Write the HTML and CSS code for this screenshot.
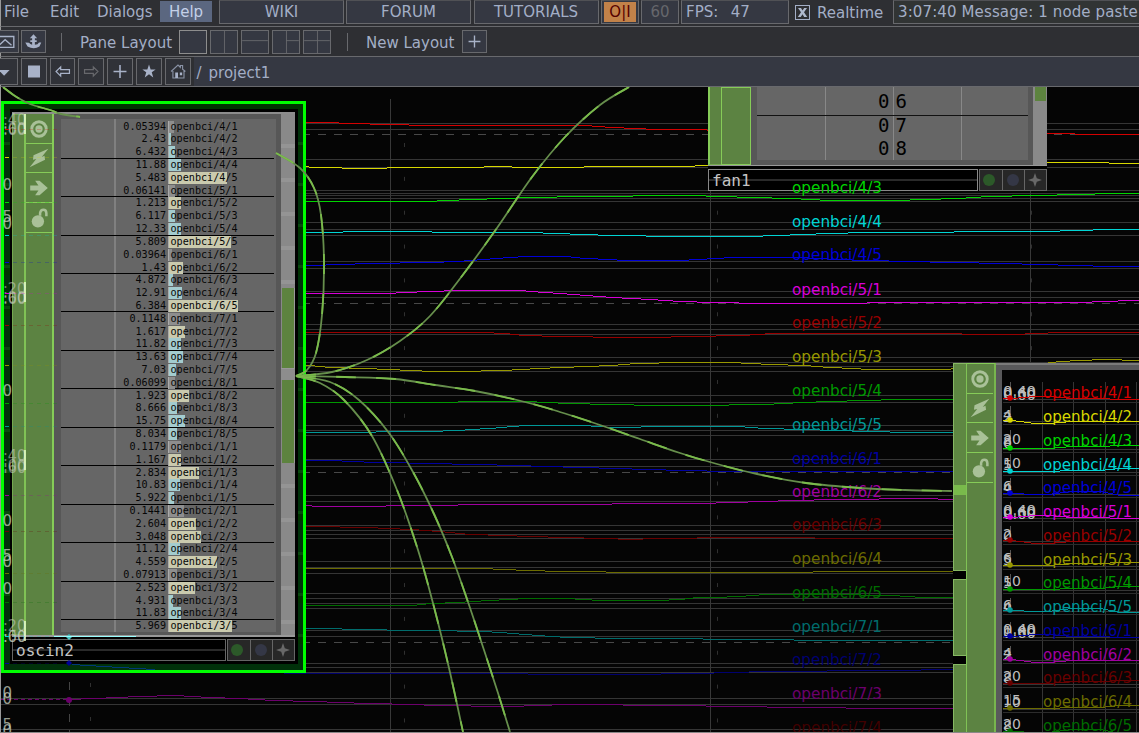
FILE: index.html
```html
<!DOCTYPE html>
<html lang="en">
<head>
<meta charset="utf-8">
<title>project1</title>
<link rel="stylesheet" href="styles.css">
</head>
<body>
<svg width="0" height="0" class="defs">
  <symbol id="i-target" viewBox="0 0 20 20"><circle cx="10" cy="10" r="6.600" fill="none" stroke="currentColor" stroke-width="2.600"/><circle cx="10" cy="10" r="3.300" fill="currentColor"/></symbol>
  <symbol id="i-bolt" viewBox="0 0 20 20"><path fill="currentColor" d="M18.500 1.500 5 7.500 4.500 11.500 7.500 11 1.500 18.500 15.500 11.500 15 8 12.500 9Z"/></symbol>
  <symbol id="i-arrow" viewBox="0 0 20 20"><path fill="currentColor" d="M2 7.800h7.500L6.500 3.500h4l7.500 6.500-7.500 6.500h-4l3-4.300H2z"/></symbol>
  <symbol id="i-lock" viewBox="0 0 20 20"><circle cx="9" cy="13" r="5.600" fill="currentColor"/><path d="M11 8V5.500Q11.500 2.500 14 2.500T16.700 5.500V8.500" fill="none" stroke="currentColor" stroke-width="2.300"/></symbol>
  <symbol id="i-spark" viewBox="0 0 20 20"><path fill="currentColor" d="M10 3l1.800 5.200L17 10l-5.200 1.800L10 17l-1.800-5.200L3 10l5.200-1.800z"/></symbol>
</svg>

<div class="app">
  <nav class="menu">
    <span class="item file">File</span>
    <span class="item edit">Edit</span>
    <span class="item dialogs">Dialogs</span>
    <span class="item help">Help</span>
    <div class="tabs">
      <span class="box link">WIKI</span>
      <span class="box link gap2">FORUM</span>
      <span class="box link gap3">TUTORIALS</span>
    </div>
    <span class="box power"><b>O|I</b></span>
    <span class="box rate">60</span>
    <span class="box fps">FPS:&nbsp; 47</span>
    <span class="check"><svg viewBox="0 0 13 13"><path d="M2 2h3l1.500 2.500L8.200 2H11L8 6.300l3.200 4.700h-3L6.500 8.300 4.700 11H1.800l3.200-4.700z" fill="#aeb8cc"/></svg></span>
    <span class="realtime">Realtime</span>
    <span class="box message">3:07:40 Message: 1 node paste</span>
  </nav>

  <div class="layoutbar">
    <span class="sq first"><svg viewBox="0 0 25 23"><path d="M1 6h19.500v12H1M5 15l6-5.500 7 6" fill="none" stroke="#a8b2c8" stroke-width="1.500"/></svg></span>
    <span class="sq"><svg viewBox="0 0 25 23"><path d="M12.500 3.500l4 4.500h-2.500v2h2v2h-2v3q3.500 0 4.500-2.500h2.500l-2 4.500q-6 4-13 0l-2.500-4.500 4 .5q1.500 2 3.500 2v-3h-2v-2h2v-2H8.500z" fill="#a8b2c8"/></svg></span>
    <i class="sep"></i>
    <span class="label pane">Pane Layout</span>
    <div class="layouts">
      <svg class="lay on" viewBox="0 0 28 24"></svg>
      <svg class="lay" viewBox="0 0 28 24"><path d="M14.500 0v24"/></svg>
      <svg class="lay" viewBox="0 0 28 24"><path d="M0 10.500h28"/></svg>
      <svg class="lay" viewBox="0 0 28 24"><path d="M14.500 0v24M14 10.500h14"/></svg>
      <svg class="lay" viewBox="0 0 28 24"><path d="M14.500 0v24M0 10.500h28"/></svg>
    </div>
    <i class="sep two"></i>
    <span class="label newl">New Layout</span>
    <span class="sq add"><svg viewBox="0 0 25 23"><path d="M12.500 5v13M6 11.500h13" stroke="#a8b2c8" stroke-width="1.500"/></svg></span>
  </div>

  <div class="pathbar">
    <span class="pb cut"><svg viewBox="0 0 26 27"><path d="M6 12h12l-6 6z" fill="#a8b2c8"/></svg></span>
    <span class="pb"><svg viewBox="0 0 26 27"><path d="M6.500 7h13v13h-13z" fill="#a8b2c8"/></svg></span>
    <span class="pb"><svg viewBox="0 0 26 27"><path d="M5.500 13.500l5-5v3h9.500v4h-9.500v3z" fill="none" stroke="#a8b2c8" stroke-width="1.300"/></svg></span>
    <span class="pb"><svg viewBox="0 0 26 27"><path d="M20.500 13.500l-5-5v3H6v4h9.500v3z" fill="none" stroke="#67686c" stroke-width="1.300"/></svg></span>
    <span class="pb"><svg viewBox="0 0 26 27"><path d="M13 6.500v14M6 13.500h14" stroke="#a8b2c8" stroke-width="1.700"/></svg></span>
    <span class="pb"><svg viewBox="0 0 26 27"><path d="M13 6l1.800 5.200h5.400l-4.200 3.200 1.600 5.600L13 16.600 8.400 20l1.600-5.600-4.200-3.200h5.400z" fill="#a8b2c8"/></svg></span>
    <span class="pb"><svg viewBox="0 0 26 27"><path d="M5.500 13.500l7.500-7 2.500 2.500V7h2.500v4l3 2.500M7.500 13v7.500h12V13" fill="none" stroke="#8a93a6" stroke-width="1.200"/><path d="M10 14.500h3v6h-3zM15 14.500h2.500v3h-2.500z" fill="#a8b2c8"/></svg></span>
    <span class="path"><span class="slash">/</span><span class="proj">project1</span></span>
  </div>

  <main class="network">
    <svg class="plot" id="plot" viewBox="0 87 1139 645"></svg>

    <section class="node oscin">
      <div class="body">
        <div class="inputs"></div>
        <div class="flags">
          <svg><use href="#i-target"/></svg><svg><use href="#i-bolt"/></svg><svg><use href="#i-arrow"/></svg><svg><use href="#i-lock"/></svg>
        </div>
        <div class="frame"><div class="channels" id="channels"></div></div>
        <div class="outputs"><i class="level"></i><i class="port"></i><i class="level low"></i></div>
      </div>
      <footer class="caption">
        <span class="name">oscin2</span>
        <span class="dot"><i class="green"></i></span><span class="dot"><i></i></span><span class="dot"><svg><use href="#i-spark"/></svg></span>
      </footer>
    </section>

    <section class="node fan">
      <div class="body">
        <div class="inputs"></div>
        <div class="flags"></div>
        <div class="frame"><div class="table"><span>0<b>6</b></span><span>0<b>7</b></span><span>0<b>8</b></span></div></div>
        <div class="outputs"><i class="level"></i></div>
      </div>
      <footer class="caption">
        <span class="name">fan1</span>
        <span class="dot"><i class="green"></i></span><span class="dot"><i></i></span><span class="dot"><svg><use href="#i-spark"/></svg></span>
      </footer>
    </section>

    <section class="node trail">
      <div class="inputs"><i class="seg a"><i></i></i><i class="seg b"></i><i class="seg c"></i></div>
      <div class="flags">
        <svg><use href="#i-target"/></svg><svg><use href="#i-bolt"/></svg><svg><use href="#i-arrow"/></svg><svg><use href="#i-lock"/></svg>
      </div>
      <div class="frame"><div class="view"></div></div>
    </section>

    <svg class="plot over" id="over" viewBox="0 87 1139 645"></svg>
  </main>
</div>
<script src="app.js"></script>
</body>
</html>
```
FILE: styles.css
```css
* { box-sizing: border-box; }
body { margin: 0; background: #000; overflow: hidden; }
.defs { position: absolute; }
.app { width: 1139px; height: 733px; display: flex; flex-direction: column; overflow: hidden;
  font: 15px/20px "DejaVu Sans", Verdana, sans-serif; color: #a3aec6; background: #2e2f33; white-space: nowrap; }
svg { display: block; }

.menu { height: 27px; flex: none; display: flex; border-bottom: 1px solid #68696d; border-left: 1px solid #999; }
.item { height: 21px; margin-top: 1px; line-height: 22px; flex: none; }
.file { margin-left: 3px; width: 46px; }
.edit { width: 47px; }
.dialogs { width: 63px; }
.help { width: 52px; background: #5b6780; text-align: center; color: #c3d0e8; }
.tabs { display: flex; margin-left: 7px; }
.box { height: 24px; flex: none; border: 1px solid #68696d; border-top-color: #505155; background: #353842; line-height: 23px; }
.link { width: 125px; text-align: center; }
.gap2 { margin-left: 2px; }
.gap3 { margin-left: 3px; padding-right: 1px; }
.power { width: 38px; margin-left: 2px; padding: 1px 2px; }
.power b { display: block; height: 20px; background: #c28249; color: #500; text-align: center; font-weight: 400; line-height: 21px; }
.rate { width: 38px; margin-left: 2px; text-align: center; color: #66676c; }
.fps { width: 108px; margin-left: 2px; padding-left: 4px; word-spacing: 1.500px; }
.check { width: 15px; height: 15px; margin: 5px 0 0 6px; border: 1px solid #a3aec6; flex: none; }
.realtime { width: 76px; margin-left: 7px; line-height: 27px; flex: none; }
.message { width: 260px; background: #313434; padding-left: 4px; letter-spacing: .120px; }

.layoutbar { height: 30px; flex: none; display: flex; align-items: center; border-bottom: 1px solid #68696d; border-left: 1px solid #999; }
.sq { width: 25px; height: 23px; border: 1px solid #68696d; background: #353842; margin-left: 2px; flex: none; }
.sq svg { width: 23px; height: 21px; }
.sq.first { margin-left: -7px; }
.sep { width: 1px; height: 18px; background: #68696d; margin-left: 15px; flex: none; }
.label { flex: none; line-height: 22px; padding-top: 2px; }
.pane { margin-left: 18px; width: 99px; }
.layouts { display: flex; gap: 3px; }
.lay { width: 28px; height: 24px; border: 1px solid #68696d; background: #353842; fill: none; stroke: #68696d; }
.lay.on { border-color: #8d8d8d; }
.sep.two { margin-left: 16px; }
.newl { margin-left: 18px; width: 96px; }
.add { margin-left: 0; }

.pathbar { height: 30px; flex: none; display: flex; align-items: center; gap: 3px; border-bottom: 1px solid #68696d; border-left: 1px solid #999; }
.pb { width: 25.800px; height: 27px; border: 1px solid #68696d; background: #303238; flex: none; }
.pb svg { width: 24px; height: 25px; }
.pb.cut { margin-left: -9px; }
.path { flex: 1; height: 29px; background: #353842; padding-left: 3px; line-height: 32px; display: flex; }
.slash { width: 12px; }

.network { position: relative; flex: 1; background: #050505; border-left: 1px solid #999; border-bottom: 1px solid #8a8888; overflow: hidden; }
.plot { position: absolute; left: -1px; top: 0; width: 1139px; height: 645px; }
.plot text { font-family: "DejaVu Sans", sans-serif; }
.over { pointer-events: none; }

.node { position: absolute; }
.body { display: flex; }
.inputs { width: 12px; flex: none; background: #5c8342; border: 1px solid #74a84f; border-right: 0; }
.flags { flex: none; background: #5c8342; border-left: 2px solid #80c255; border-right: 1px solid #86cc58; color: #a9c198; }
.flags svg { width: 26px; height: 30px; padding: 4px 2px 3px; border-bottom: 1px solid #86cc58; }
.flags svg:nth-child(2) { height: 29px; padding-top: 3px; }
.frame { background: #575757; flex: 1; }
.outputs { background: #898989; flex: none; }
.caption { display: flex; }
.name { font: 16px/22px "DejaVu Sans Mono", monospace; color: #c4c4c4; border: 1px solid #666; flex: 1; padding-left: 3px;
  background: linear-gradient(#000 45%, #2a2a2a 45% 55%, #000 55%); }
.dot { border: 1px solid #666; background: #272727; display: grid; place-items: center; flex: none; width: 23px; margin-left: -1px; padding-right: 2px; }
.dot:nth-child(2) { margin-left: 1px; width: 24px; padding-right: 4px; }
.dot i { width: 12px; height: 12px; border-radius: 50%; background: #343746; }
.dot .green { background: #2c5929; }
.dot svg { width: 20px; height: 20px; color: #686868; }

.oscin { left: 0; top: 14px; width: 305px; height: 572px; border: 3px solid #0f0; padding: 8px;
  background: linear-gradient(#000, #000) 6px 5px / 288px 555px no-repeat, repeating-linear-gradient(#003300 0 7px, #00310a 7px 38px, #09480e 38px 41px); }
.oscin .body { height: 525px; border-top: 2px solid #8d8d8d; border-bottom: 2px solid #999; }
.oscin .flags { width: 30px; border-right-width: 2px; }
.oscin .frame { padding: 5px 5px 5px 7px; }
.oscin .outputs { width: 14px; padding-top: 174px; background: repeating-linear-gradient(#898989 0 30px, #949494 30px 34px); }
.level { display: block; height: 80px; background: #5d833f; border-left: 1px solid #898989; border-right: 1px solid #999; }
.port { display: block; height: 12px; background: #8d8d8d; border-top: 1px solid #999; }
.low { height: 83px; }
.oscin .caption { margin: 2px 0 0; height: 22px; }
.channels { height: 513px; overflow: hidden; padding-top: 1.600px; background: linear-gradient(#808080, #808080) 53px 0 / 2px 100% no-repeat, linear-gradient(#777, #777) 161px 0 / 1px 100% no-repeat, #666;
  font: 10.150px/12px "DejaVu Sans Mono", monospace; color: #060606; }
.row { display: grid; grid-template-columns: 105px 1fr; column-gap: 2px; height: 12.820px; }
.row.rule { background: linear-gradient(#000, #000) 0 100% / 213px 1.300px no-repeat; }
.row .val { text-align: right; }
.row .chan { display: flex; }
.bar { height: 12px; margin-right: calc(-1 * var(--w)); width: var(--w); border-left: 1px solid #aaa; flex: none; }
.bar.g { background: #8e8e8e; }
.bar.c { background: #a3cccf; }
.bar.y { background: #cacaae; }
.row .txt { padding-left: 2.500px; position: relative; }

.fan { left: 707px; top: 0; width: 339px; height: 104px; background: #000; }
.fan .body { height: 79px; border-bottom: 1px solid #999; margin-bottom: 3px; }
.fan .inputs { width: 13px; border-left: 2px solid #86cc58; border-top: 0; }
.fan .flags { width: 30px; border: 1px solid #86cc58; }
.fan .frame { padding: 0 5px 5px 6px; }
.fan .outputs { width: 14px; padding: 0 1px 0 2px; }
.fan .level { height: 14px; border: 0; }
.fan .caption { height: 22px; }
.fan .name { border-color: #888; }
.table { height: 73px; color: #000; font: 19px/23.500px "DejaVu Sans Mono", monospace; padding-top: 3px; display: grid; justify-content: center; grid-auto-rows: 23.500px;
  background: linear-gradient(#111, #111) 0 28px / 100% 1px no-repeat, linear-gradient(#888, #888) 68px 0 / 1px 100% no-repeat, linear-gradient(#888, #888) 136px 0 / 1px 100% no-repeat, linear-gradient(#888, #888) 204px 0 / 1px 100% no-repeat, #666; }
.table span { display: flex; gap: 6px; }
.table b { font-weight: 400; }

.trail { left: 952px; top: 276px; width: 187px; height: 369px; display: flex; background: #000; }
.trail .inputs { width: 13px; border: 0; background: none; display: flex; flex-direction: column; gap: 8px; }
.seg { border: 1px solid #86b863; border-right: 0; background: #5e8742; display: block; }
.seg.a { height: 208px; padding-top: 121px; }
.seg.a i { display: block; height: 10px; background: #79ba4b; }
.seg.b { height: 77px; }
.seg.c { flex: 1; border-bottom: 0; }
.trail .flags { width: 30px; border-left-width: 1px; border-right: 2px solid #78b54e; border-top: 1px solid #86cc58; }
.trail .frame { display: flex; padding: 7px 0 0 6px; background: linear-gradient(#7b7b7b 2px, #59595b 2px); }
.view { flex: 1; background: #050505; }
```
FILE: app.js
```js
const palette = {
  r: '#d40000', y: '#d8d800', g: '#00d400', c: '#00d4d4', b: '#0000d8', m: '#d800d8',
  r2: '#980000', y2: '#989800', g2: '#009800', c2: '#009898', b2: '#0000a0', m2: '#a000a0',
  r3: '#680000', y3: '#6c6c00', g3: '#006c00', c3: '#006c6c', b3: '#000070', m3: '#6c006c', r4: '#400000'
};
const plot = [];
const over = [];
const line = (x1, y1, x2, y2, c, extra = '') =>
  `<path d="M${x1} ${y1}L${x2} ${y2}" stroke="${c}" ${extra}/>`;
const text = (x, y, s, fill, size, len) =>
  `<text x="${x}" y="${y}" fill="${fill}" font-size="${size}" ${len ? `textLength="${len}" lengthAdjust="spacingAndGlyphs"` : ''}>${s}</text>`;
// one-pixel stepped trace: each level is held, then jumps to the next sample
function poly(pts, c) {
  const p = pts.split(' ').map(s => s.split(',').map(Number));
  let d = `M${p[0][0]} ${p[0][1] + .5}`;
  for (let i = 1; i < p.length; i++) {
    const [x0, y0] = p[i - 1], [x1, y1] = p[i];
    const n = Math.abs(y1 - y0), dir = Math.sign(y1 - y0);
    for (let k = 1; k <= n; k++) {
      const x = Math.round(x0 + (x1 - x0) * (k - .5) / n);
      d += `H${x}M${x} ${y0 + dir * k + .5}`;
    }
    d += `H${x1}`;
  }
  return `<path d="${d}" fill="none" stroke="${c}"/>`;
}

// background grid
[123,129,159,167,190,193,195,198,201,222,229,235,261,268,291,297,324,329,334,357,362,366,371,395,402,
 425,430,435,459,466,495,501,525,530,534,538,561,567,573,593,598,603,608,630,636,663,667,672,698,704,729]
  .forEach(y => plot.push(line(0, y + .5, 1139, y + .5, '#353535')));
[134,303,472,642].forEach(y => plot.push(line(302, y + .5, 1139, y + .5, '#484848', 'stroke-dasharray="8 8"')));
[390,710,1030].forEach(x => plot.push(line(x + .5, 99, x + .5, 732, '#383838')));
[404,717,1031].forEach(x => plot.push(line(x + .5, 143, x + .5, 732, '#303030', 'stroke-dasharray="4 29.85"')));
plot.push(line(69.5, 682, 69.5, 732, '#444', 'stroke-dasharray="8 8"'));
plot.push(line(90.5, 683, 90.5, 732, '#303030', 'stroke-dasharray="4 30"'));

// waveforms
const waves = [
 ['r','276,122 324,122 385,124 432,125 585,125 612,127 635,128 656,129 757,130 1028,132 1046,133 1103,134 1139,134'],
 ['y','276,166 341,167 342,168 386,168 387,167 483,167 484,166 511,166 512,167 583,167 584,166 690,166 700,165 740,164 766,162 800,161 925,163 1015,163 1016,162 1108,162 1109,163 1139,163'],
 ['g','276,201 426,201 470,199 504,198 528,197 585,196 680,195 690,195 753,197 791,198 829,200 895,200 924,199 958,198 989,196 1034,195 1079,194 1110,193 1139,193'],
 ['c','276,232 342,232 343,231 431,231 432,232 529,232 583,234 613,235 679,236 750,236 803,234 829,233 867,232 1040,231 1080,230 1105,229 1139,229'],
 ['b','276,265 311,265 369,263 431,262 457,261 484,259 509,257 526,256 566,256 585,258 610,259 624,260 680,260 733,257 800,257 837,259 867,260 910,261 950,262 1007,263 1036,264 1080,265 1105,266 1139,266'],
 ['m','276,293 386,293 427,291 460,290 521,290 530,291 561,293 586,295 613,297 650,299 681,301 713,302 765,303 866,303 867,302 1079,302 1131,300 1139,300'],
 ['r2','276,332 483,332 505,333 523,335 560,336 625,337 651,337 690,336 742,335 772,333 910,333 1014,334 1059,332 1139,332'],
 ['y2','276,364 310,365 330,367 367,368 387,369 413,370 431,371 459,371 503,370 521,369 538,368 562,367 585,366 612,365 636,363 681,362 731,362 771,364 805,365 829,367 854,368 868,369 950,369 955,367 1033,365 1044,363 1060,361 1079,360 1105,359 1139,360'],
 ['g2','276,402 457,402 459,401 527,401 568,403 611,404 657,405 694,405 764,404 803,402 828,401 866,400 895,399 954,399'],
 ['c2','276,433 324,432 427,431 458,430 471,429 488,428 503,427 510,426 528,425 584,425 613,427 668,426 739,426 764,428 803,429 836,430 868,431 911,432 954,432'],
 ['b2','276,460 341,460 342,461 385,462 431,463 472,464 521,465 541,466 585,467 613,468 650,469 681,470 732,471 954,471'],
 ['m2','276,504 324,506 385,506 387,505 457,505 458,504 611,504 612,503 700,503 732,502 763,501 792,500 836,499 922,498 954,499'],
 ['r3','276,527 311,526 368,527 387,528 413,529 425,530 451,532 458,533 472,534 504,535 529,536 567,537 600,538 635,539 650,538 681,538 713,537 793,537 836,538 954,538'],
 ['y3','276,568 482,568 527,570 562,571 650,572 771,572 854,571 954,571'],
 ['g3','276,605 412,605 431,603 458,602 472,601 489,600 509,599 527,598 566,598 601,600 657,600 681,599 697,597 714,597 740,596 765,594 829,594 893,595 922,597 954,597'],
 ['c3','276,628 341,628 342,629 432,630 481,631 503,632 511,633 526,634 538,635 567,637 623,638 702,638 703,639 793,639 794,640 954,640'],
 ['b3','284,673 527,673 528,674 625,674 696,673 732,672 765,671 888,670 954,669'],
 ['m3','69,699 118,697 138,696 176,695 209,697 240,698 273,700 313,701 368,703 415,704 432,705 510,706 566,704 680,705 731,706 803,707 889,708 954,708']
];
waves.forEach(([k, pts]) => plot.push(poly(pts, palette[k])));
plot.push(line(0, 699.5, 69, 699.5, palette.m3, 'stroke-dasharray="4 3"'));
plot.push(`<circle cx="69" cy="700" r="3" fill="${palette.m3}"/>`);

// wide plot labels
[['4/3',193,'g'],['4/4',227,'c'],['4/5',260,'b'],['5/1',295,'m'],['5/2',328,'r2'],['5/3',362,'y2'],['5/4',396,'g2'],['5/5',429.5,'c2'],
 ['6/1',464,'b2'],['6/2',497,'m2'],['6/3',530,'r3'],['6/4',564,'y3'],['6/5',598,'g3'],['7/1',632,'c3'],['7/2',665,'b3'],['7/3',699,'m3'],['7/4',733,'r4']]
  .forEach(([s, y, k]) => over.push(text(792, y, 'openbci/' + s, palette[k], 15, 90)));

// wires: smooth curve through the sampled points, in two alternating greens
function wire(pts) {
  let d = `M${pts[0]}`;
  for (let i = 0; i < pts.length - 1; i++) {
    const a = pts[i - 1] || pts[i], b = pts[i], c = pts[i + 1], e = pts[i + 2] || c;
    d += `C${b[0] + (c[0] - a[0]) / 6} ${b[1] + (c[1] - a[1]) / 6} ${c[0] - (e[0] - b[0]) / 6} ${c[1] - (e[1] - b[1]) / 6} ${c}`;
  }
  return `<path d="${d}" fill="none" stroke="#668e4c" stroke-width="1.8"/><path d="${d}" fill="none" stroke="#7abb4b" stroke-width="1.8" stroke-dasharray="20 20"/>`;
}
[
 [[296,376],[332,372],[367,360],[400,341],[430,316],[462,276],[497,228],[532,177],[565,137],[600,105],[629,87]],
 [[276,153],[300,168],[314,188],[321,215],[324,262],[322,315],[316,353],[307,370],[296,376]],
 [[296,376],[345,377],[395,379],[435,385],[475,391],[517,400],[557,411],[600,425],[640,439],[680,453],[717,464],[757,474],[806,483],[860,488],[905,490],[952,491]],
 [[296,376],[320,383],[344,400],[372,436],[397,490],[418,550],[434,607],[449,668],[463,732]],
 [[296,376],[330,382],[359,400],[389,433],[413,472],[434,514],[452,557],[468,602],[484,650],[498,693],[510,732]],
 [[3,87],[15,96],[30,104],[50,110],[61,114],[80,117]]
].forEach(p => over.push(wire(p)));

// axis figures seen through the left edge of the selected node
const faint = '#c8d0c0';
[[125,':40'],[135,':60'],[134,':00'],[294,':20'],[304,':60'],[303,':00'],[461,':40'],[473,':60'],[471,':00'],[631,':20'],[642,':60'],[642,':00']]
  .forEach(([y, s]) => over.push(`<g opacity=".55">${text(3, y, s, faint, 15, 23)}</g>`));
[[190,'0'],[222,'5'],[229,'0'],[396,'0'],[526,'0'],[561,'5'],[567,'0'],[594,'0'],[698,'0'],[704,'0'],[730,'5'],[736,'0']]
  .forEach(([y, s]) => over.push(`<g opacity=".75">${text(2.5, y, s, faint, 15)}</g>`));
[112,280,448,619].forEach(y => over.push(line(25, y + 2, 25, y + 22, '#eaffd0', 'stroke-width="1.5"')));
[[129,'r'],[157,'y'],[202,'g'],[235,'c'],[262,'b'],[293,'m'],[325,'r2'],[365,'y2'],[403,'g2'],[426,'c2'],[495,'m2'],[531,'r3'],[573,'y3'],[602,'g3'],[636,'c'],[663,'b2']]
  .forEach(([y, k]) => {
    over.push(line(5, y + .5, 12, y + .5, palette[k], 'stroke-dasharray="4 3"'));
    over.push(line(13, y + .5, 58, y + .5, palette[k], 'stroke-dasharray="4 4" opacity=".22"'));
  });
over.push('<path d="M69 634l3 3-3 3-3-3z" fill="#49c5c5"/><path d="M69 660l3 3-3 3-3-3z" fill="#000098"/>');
over.push(poly('72,664 88,665 120,667 155,669', '#003878'));
over.push(line(54, 636.5, 136, 636.5, '#9ff'));

// compact plot in the right-hand node
[1042,1073,1105,1136].forEach(x => over.push(line(x + .5, 382, x + .5, 732, '#353535')));
over.push(line(1010.5, 382, 1010.5, 732, '#555', 'stroke-dasharray="14 10"'));
const small = [
 ['4/1','r',398,398,['0.40','0.60','0.00']],['4/2','y',422,420,['4','2']],['4/3','g',446,448,['20','8','0']],['4/4','c',470,471,['10','5']],
 ['4/5','b',493,493,['6','4']],['5/1','m',517,517,['0.40','0.60','0.00']],['5/2','r2',541,540,['2','0']],['5/3','y2',565,565,['6','5']],
 ['5/4','g2',588,589,['10','5']],['5/5','c2',612,610,['6','4']],['6/1','b2',636,636,['0.40','1.00','0.60']],['6/2','m2',660,659,['4','2']],
 ['6/3','r3',683,683,['20','8']],['6/4','y3',707,708,['15','10']],['6/5','g3',731,731,['20','8']]
];
small.forEach(([s, k, base, y, marks], i) => {
  over.push(line(1003, y + 1.5, 1139, y + 1.5, '#353535') + line(1003, y + 4.5, 1139, y + 4.5, '#2c2c2c'));
  marks.forEach((m, j) => over.push(text(1003, base + j * 2 - 2, m, '#bdbdbd', 14, m.length === 4 ? 33 : 0)));
  over.push(text(1043, base, 'openbci/' + s, palette[k], 15, 89));
  const bend = [[-2,0,1],[3,1,1],[0,-2,-3],[0,-1,-3],[1,-2,2]][i % 5];
  over.push(poly(`1003,${y} 1012,${y} 1035,${y + bend[0]} 1048,${y + bend[0]} 1072,${y + bend[1]} 1100,${y + bend[1]} 1120,${y + bend[2]} 1139,${y + bend[2]}`, palette[k]));
  over.push(`<circle cx="1010" cy="${y}" r="2.800" fill="${palette[k]}"/>`);
});

document.getElementById('plot').innerHTML = plot.join('');
document.getElementById('over').innerHTML = over.join('');

// channel list: value, channel, bar tint, bar width
const channels = `0.05394 4/1 g 6|2.43 4/2 c 3|6.432 4/3 c 7|11.88 4/4 c 13|5.483 4/5 y 59|0.06141 5/1 g 7|1.213 5/2 y 13|6.117 5/3 c 7|12.33 5/4 c 13|5.809 5/5 y 63|0.03964 6/1 g 4|1.43 6/2 y 15|4.872 6/3 c 5|12.91 6/4 c 14|6.384 6/5 y 70|0.1148 7/1 g 12|1.617 7/2 y 17|11.82 7/3 c 13|13.63 7/4 c 15|7.03 7/5 c 8|0.06099 8/1 g 7|1.923 8/2 y 21|8.666 8/3 c 9|15.75 8/4 c 17|8.034 8/5 c 9|0.1179 1/1 g 13|1.167 1/2 y 13|2.834 1/3 y 31|10.83 1/4 c 12|5.922 1/5 c 6|0.1441 2/1 g 16|2.604 2/2 y 28|3.048 2/3 y 33|11.12 2/4 c 12|4.559 2/5 y 49|0.07913 3/1 g 9|2.523 3/2 y 27|4.931 3/3 c 5|11.83 3/4 c 13|5.969 3/5 y 64`;
document.getElementById('channels').innerHTML = channels.split('|').map((r, i) => {
  const [v, n, t, w] = r.split(' ');
  return `<div class="row${i % 3 === 2 ? ' rule' : ''}"><span class="val">${v}</span><span class="chan"><i class="bar ${t}" style="--w:${w}px"></i><span class="txt">openbci/${n}</span></span></div>`;
}).join('');
```
